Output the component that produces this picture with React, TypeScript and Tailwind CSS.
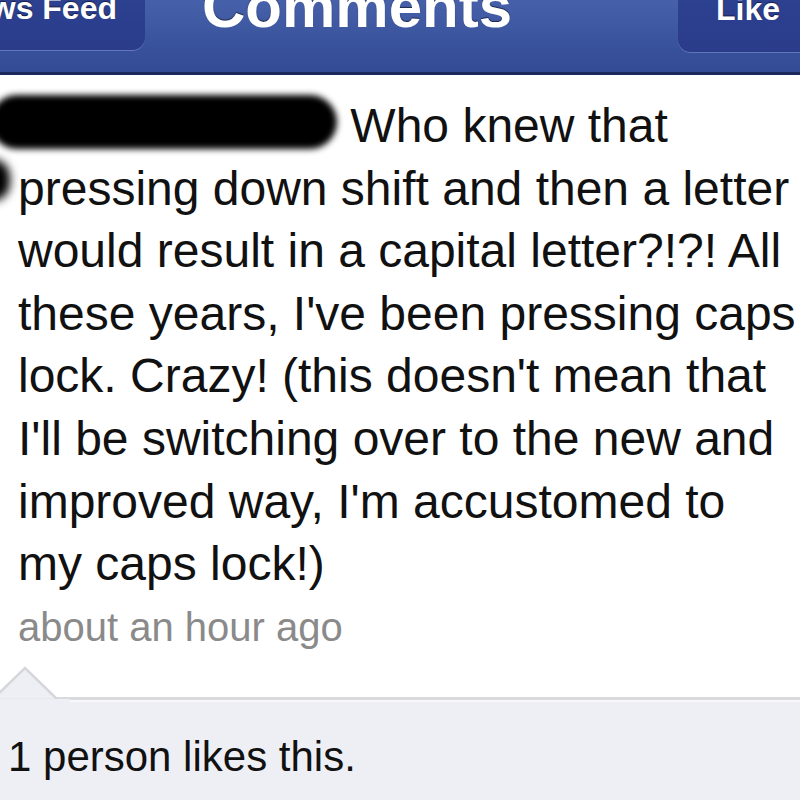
import React from "react";

const lines = [
    "pressing down shift and then a letter",
    "would result in a capital letter?!?! All",
    "these years, I've been pressing caps",
    "lock. Crazy! (this doesn't mean that",
    "I'll be switching over to the new and",
    "improved way, I'm accustomed to",
    "my caps lock!)",
];

function Header() {
    return (
        <div className="border-b-[3px] border-[#1b2859]">
            <div className="h-[72px] flex items-start overflow-hidden bg-gradient-to-b from-[#4661aa] via-[#3c559f] to-[#334a95] text-white font-bold [text-shadow:0_-1px_1px_rgba(0,0,0,0.55)]">
                <div className="ml-[-60px] w-[205px] h-[50px] shrink-0 flex justify-end pr-[28px] rounded-b-[13px] bg-gradient-to-b from-[#2d4191] to-[#2a3c8a] shadow-[0_1px_0_#6277b8]">
                    <span className="text-[32px] leading-none mt-[-8px]">News Feed</span>
                </div>
                <span className="ml-[57px] text-[60px] leading-none mt-[-23px] whitespace-nowrap">Comments</span>
                <div className="ml-auto mr-[-40px] w-[162px] h-[52px] shrink-0 flex pl-[38px] rounded-b-[13px] bg-gradient-to-b from-[#2d4191] to-[#2a3c8a] shadow-[0_1px_0_#6277b8]">
                    <span className="text-[32px] leading-none mt-[-7px]">Like</span>
                </div>
            </div>
        </div>
    );
}

export default function App() {
    return (
        <div className="w-[800px] h-[800px] overflow-hidden bg-white font-['Liberation_Sans',Arial,sans-serif]">
            <Header />

            <div className="relative pt-[20px] pl-[18px] pb-[39px] text-[#111]">
                {/* redaction over the avatar */}
                <div className="absolute left-[-26px] top-[84px] w-[36px] h-[42px] rounded-full bg-black blur-[5px]" />

                <div className="text-[48px] leading-[62.6px] whitespace-nowrap">
                    <div>
                        <span className="inline-block align-top ml-[-28px] w-[347px] h-[54px] rounded-full bg-black blur-[3px]" />{" "}
                        Who knew that
                    </div>
                    {lines.map((l) => (
                        <div key={l}>{l}</div>
                    ))}
                </div>
                <div className="text-[40px] leading-[62.6px] text-[#8a8a8a]">about an hour ago</div>
            </div>

            <div className="relative border-t-[3px] border-[#d9d9de] bg-[#eeeff4] h-[200px]">
                <div className="h-[2px] bg-[#f8f8fb]" />
                <svg className="absolute left-0 top-[-34px]" width="70" height="38" viewBox="0 0 70 38">
                    <polygon points="-8,34 25,2 58,34" fill="#eeeff4" stroke="#d6d6db" strokeWidth="2.5" />
                    <rect x="-10" y="33" width="80" height="5" fill="#eeeff4" />
                </svg>
                <div className="pt-[30px] pl-[8px] text-[42px] leading-[50px] text-[#111]">1 person likes this.</div>
            </div>
        </div>
    );
}
